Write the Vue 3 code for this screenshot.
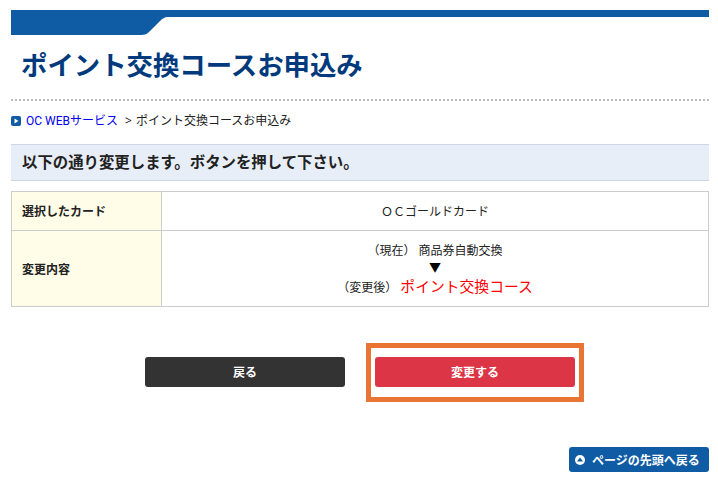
<template>
  <div class="page">
    <header class="head">
      <svg class="head-bar" width="698" height="25" viewBox="0 0 698 25">
        <path d="M0 0H698V7H158C153 7 151 9 148 12L139 21C136 24 134 25 130 25H0Z" fill="#105ca4" />
      </svg>
      <h1 class="title">ポイント交換コースお申込み</h1>
    </header>

    <nav class="crumbs">
      <svg class="crumb-icon" width="10" height="10" viewBox="0 0 10 10">
        <rect width="10" height="10" rx="2" fill="#105ca4" />
        <path d="M3.5 2.4L7.5 5L3.5 7.6Z" fill="#fff" />
      </svg>
      <a class="crumb-link" href="#">OC WEBサービス</a>
      <span class="crumb-sep">&gt;</span>
      <span>ポイント交換コースお申込み</span>
    </nav>

    <h2 class="message">以下の通り変更します。ボタンを押して下さい。</h2>

    <table class="detail">
      <tbody>
        <tr class="row-card">
          <th>選択したカード</th>
          <td>ＯＣゴールドカード</td>
        </tr>
        <tr class="row-change">
          <th>変更内容</th>
          <td>
            <div class="line">（現在） 商品券自動交換</div>
            <div class="arrow">▼</div>
            <div class="line">（変更後） <span class="after">ポイント交換コース</span></div>
          </td>
        </tr>
      </tbody>
    </table>

    <div class="actions">
      <button class="btn btn-back" type="button">戻る</button>
      <button class="btn btn-submit" type="button">
        変更する
        <span class="highlight"></span>
      </button>
    </div>

    <div class="to-top">
      <a class="to-top-link" href="#">
        <svg width="10" height="10" viewBox="0 0 10 10">
          <circle cx="5" cy="5" r="5" fill="#fff" />
          <path d="M5 2.6L8 6.4H2Z" fill="#105ca4" />
        </svg>
        ページの先頭へ戻る
      </a>
    </div>
  </div>
</template>

<script setup>
</script>

<style>
html,
body {
  background: #fff;
}
</style>

<style scoped>
.page {
  width: 698px;
  height: 474px;
  padding: 10px 9px 0 11px;
  overflow: hidden;
  font-family: "Noto Sans", "Noto Sans CJK JP", sans-serif;
  font-size: 12px;
  color: #222;
}

.head {
  border-bottom: 2px dotted #bbb;
  height: 89px;
}

.head-bar {
  display: block;
}

.title {
  margin: 13px 0 0 10px;
  font-size: 26.4px;
  line-height: 34px;
  font-weight: 700;
  color: #003a7d;
}

.crumbs {
  display: flex;
  align-items: center;
  height: 18px;
  margin-top: 11px;
  line-height: 18px;
}

.crumb-icon {
  margin-right: 5px;
}

.crumb-link {
  font-family: Roboto, "Noto Sans CJK JP", sans-serif;
  color: #00e;
  text-decoration: none;
}

.crumb-sep {
  margin: 0 4px 0 7px;
}

.message {
  margin: 14px 0 10px;
  height: 35px;
  padding-left: 11px;
  background: #e8eef7;
  border-top: 1px solid #cdd6e4;
  border-bottom: 1px solid #cdd6e4;
  font-size: 15.4px;
  line-height: 35px;
  font-weight: 700;
}

.detail {
  width: 100%;
  border-collapse: collapse;
  table-layout: fixed;
}

.detail th,
.detail td {
  border: 1px solid #ccc;
  padding: 0;
}

.detail th {
  width: 150px;
  padding-left: 10px;
  box-sizing: border-box;
  background: #fffce8;
  text-align: left;
  font-weight: 700;
}

.detail td {
  text-align: center;
}

.row-card {
  height: 39px;
}

.row-change {
  height: 76px;
}

.row-change td {
  padding-top: 1px;
}

.line {
  line-height: 20px;
}

.arrow {
  font-size: 12px;
  line-height: 14px;
  margin-bottom: 1px;
  color: #000;
}

.after {
  font-size: 14.8px;
  color: #f00;
}

.actions {
  display: flex;
  justify-content: center;
  gap: 30px;
  margin-top: 50px;
}

.btn {
  position: relative;
  width: 200px;
  height: 30px;
  padding: 0;
  border: none;
  border-radius: 3px;
  font-family: inherit;
  font-size: 12px;
  font-weight: 700;
  color: #fff;
  cursor: pointer;
}

.btn-back {
  background: #333;
}

.btn-submit {
  background: #dc3545;
}

/* orange frame lying over the page around the submit button */
.highlight {
  position: absolute;
  inset: -14px -9px -15px;
  border: 5px solid #ea7434;
  pointer-events: none;
}

.to-top {
  display: flex;
  justify-content: flex-end;
  margin-top: 60px;
}

.to-top-link {
  display: flex;
  align-items: center;
  gap: 7px;
  width: 140px;
  height: 25px;
  padding-left: 6px;
  box-sizing: border-box;
  border-radius: 3px;
  background: #105ca4;
  color: #fff;
  font-weight: 700;
  text-decoration: none;
}
</style>
